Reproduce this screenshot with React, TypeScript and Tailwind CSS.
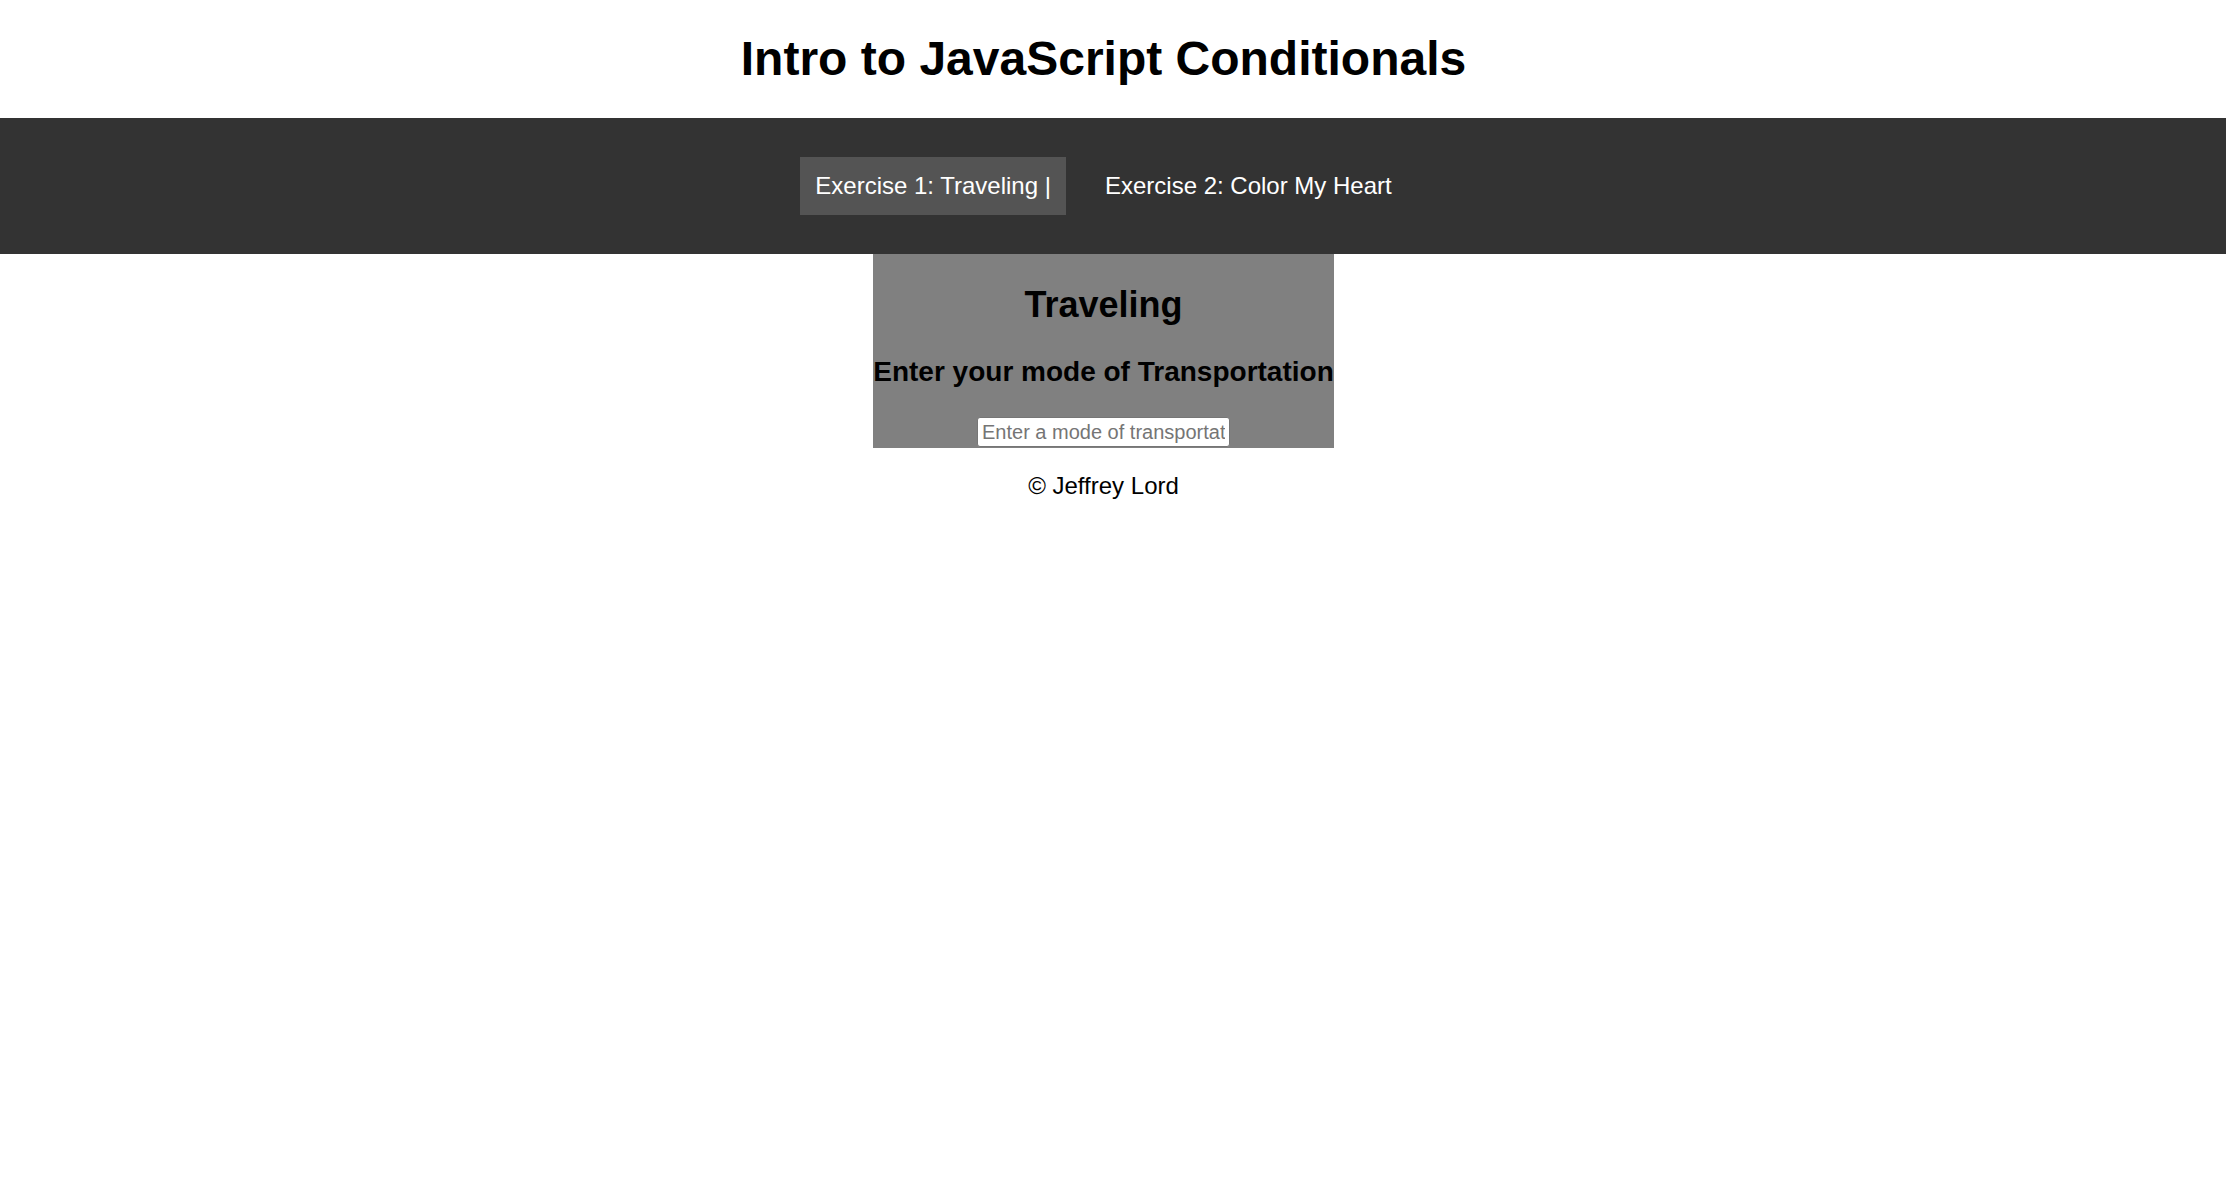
const NAV_ITEMS = [
  { label: "Exercise 1: Traveling |", active: true },
  { label: "Exercise 2: Color My Heart", active: false },
];

export default function App() {
  return (
    <div className="min-h-screen bg-white text-black font-['Liberation_Sans',Arial,sans-serif]">
      {/* header */}
      <header className="h-[118px] pt-[31px] pr-[19px] flex justify-center">
        <h1 className="text-[48px] leading-[55px] font-bold">
          Intro to JavaScript Conditionals
        </h1>
      </header>

      {/* nav */}
      <nav className="h-[136px] bg-[#333333] pr-[19px] flex items-center justify-center gap-[24px]">
        {NAV_ITEMS.map((item) => (
          <a
            key={item.label}
            href="#"
            className={`px-[15px] py-[15px] text-[24px] leading-[28px] text-white ${
              item.active ? "bg-[#545454]" : ""
            }`}
          >
            {item.label}
          </a>
        ))}
      </nav>

      {/* main */}
      <main className="pr-[19px] flex flex-col items-center">
        <section className="w-fit bg-[#808080] pt-[30px] pb-[1px] flex flex-col items-center">
          <h2 className="text-[36px] leading-[41px] font-bold">Traveling</h2>
          <h3 className="mt-[31px] text-[28px] leading-[32px] font-bold whitespace-nowrap">
            Enter your mode of Transportation
          </h3>
          <input
            type="text"
            placeholder="Enter a mode of transportation"
            className="mt-[29px] w-[253px] h-[30px] px-[4px] bg-white rounded-[3px] border-[1.5px] border-[#767676] text-[20px] text-black placeholder:text-[#757575] outline-none"
          />
        </section>
        <p className="mt-[24px] text-[24px] leading-[28px]">© Jeffrey Lord</p>
      </main>
    </div>
  );
}
